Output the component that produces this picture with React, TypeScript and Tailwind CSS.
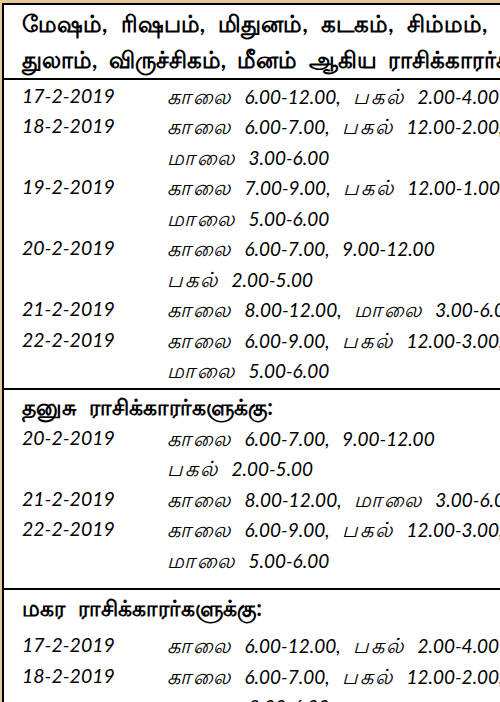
const rows1 = [
  ["17-2-2019", "காலை 6.00-12.00, பகல் 2.00-4.00"],
  ["18-2-2019", "காலை 6.00-7.00, பகல் 12.00-2.00,"],
  ["", "மாலை 3.00-6.00"],
  ["19-2-2019", "காலை 7.00-9.00, பகல் 12.00-1.00,"],
  ["", "மாலை 5.00-6.00"],
  ["20-2-2019", "காலை 6.00-7.00, 9.00-12.00"],
  ["", "பகல் 2.00-5.00"],
  ["21-2-2019", "காலை 8.00-12.00, மாலை 3.00-6.00"],
  ["22-2-2019", "காலை 6.00-9.00, பகல் 12.00-3.00,"],
  ["", "மாலை 5.00-6.00"],
];

const rows2 = [
  ["20-2-2019", "காலை 6.00-7.00, 9.00-12.00"],
  ["", "பகல் 2.00-5.00"],
  ["21-2-2019", "காலை 8.00-12.00, மாலை 3.00-6.00"],
  ["22-2-2019", "காலை 6.00-9.00, பகல் 12.00-3.00,"],
  ["", "மாலை 5.00-6.00"],
];

const rows3 = [
  ["17-2-2019", "காலை 6.00-12.00, பகல் 2.00-4.00"],
  ["18-2-2019", "காலை 6.00-7.00, பகல் 12.00-2.00,"],
  ["", "மாலை 3.00-6.00"],
];

// tamil words are drawn wider than the digits in the scan
function Time({ text }: { text: string }) {
  const parts = text.split(/([\u0B80-\u0BFF]+)/);
  return (
    <div className="text-[19px] [word-spacing:8px]">
      {parts.map((p, i) =>
        /[\u0B80-\u0BFF]/.test(p) ? (
          <span key={i} className="text-[21px] tracking-[2px]">
            {p}
          </span>
        ) : (
          <span key={i}>{p}</span>
        )
      )}
    </div>
  );
}

function Row({ date, time }: { date: string; time: string }) {
  return (
    <div className="flex h-[30.5px] items-center whitespace-nowrap italic text-black">
      <div className="w-[145px] shrink-0 text-[19.5px]">{date}</div>
      <Time text={time} />
    </div>
  );
}

export default function App() {
  return (
    <div
      className="h-[702px] w-[500px] overflow-hidden bg-[#e6c89c] pl-[2px] pt-[3px]"
      style={{ fontFamily: 'Lato, "Noto Sans", "Liberation Sans", sans-serif' }}
    >
      <div className="w-[640px] border-l-2 border-t-2 border-black bg-white">
        <div className="border-b-2 border-black px-[18px] pt-[1px] text-[22.5px] font-bold leading-[36px] whitespace-nowrap">
          <div className="[word-spacing:8px]">மேஷம், ரிஷபம், மிதுனம், கடகம், சிம்மம், கன்னி,</div>
          <div className="[word-spacing:6px]">துலாம், விருச்சிகம், மீனம் ஆகிய ராசிக்காரர்களுக்கு:</div>
        </div>

        <div className="border-b-2 border-black px-[18px] pb-[3px]">
          {rows1.map(([d, t], i) => (
            <Row key={i} date={d} time={t} />
          ))}
        </div>

        <div className="border-b-2 border-black px-[18px] pb-[13px]">
          <div className="h-[32px] text-[22px] font-bold leading-[34px] whitespace-nowrap [word-spacing:8px]">
            தனுசு ராசிக்காரர்களுக்கு:
          </div>
          {rows2.map(([d, t], i) => (
            <Row key={i} date={d} time={t} />
          ))}
        </div>

        <div className="px-[18px]">
          <div className="h-[40px] pt-[2px] text-[22px] font-bold leading-[32px] whitespace-nowrap [word-spacing:8px]">
            மகர ராசிக்காரர்களுக்கு:
          </div>
          {rows3.map(([d, t], i) => (
            <Row key={i} date={d} time={t} />
          ))}
        </div>
      </div>
    </div>
  );
}
